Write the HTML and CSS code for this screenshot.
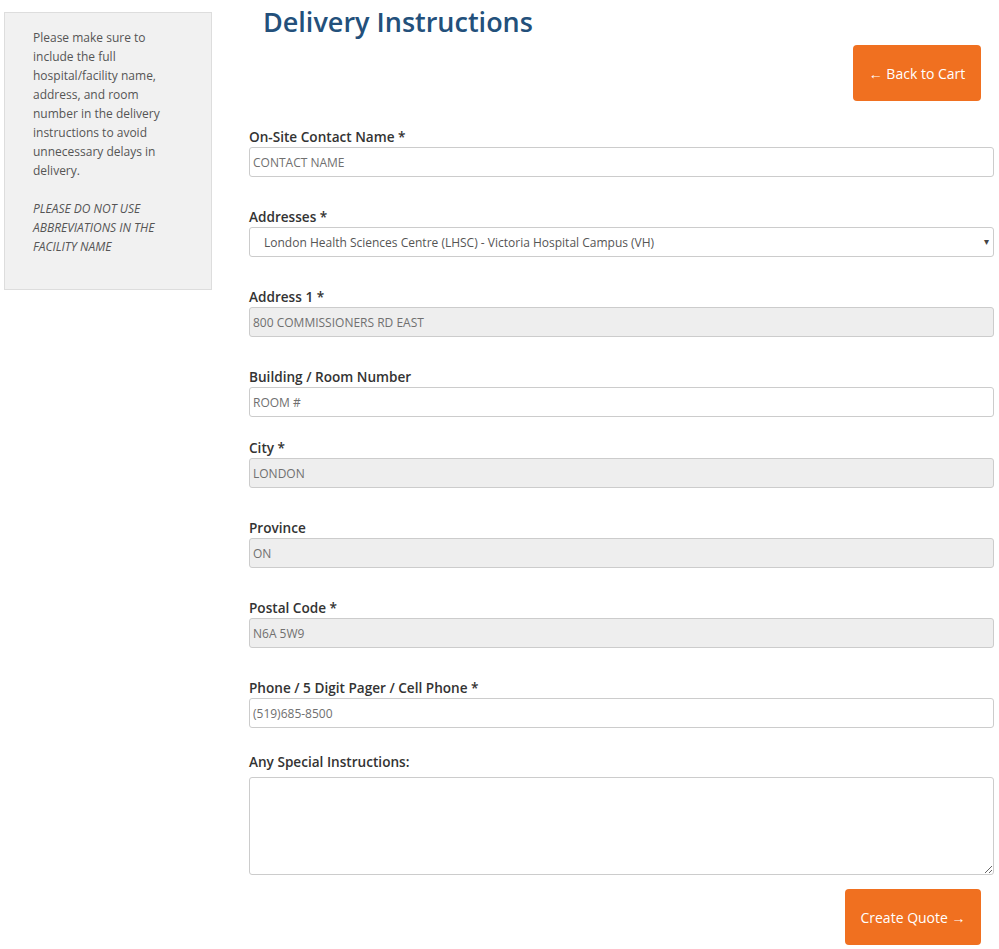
FILE: index.html
```html
<!DOCTYPE html>
<html lang="en">
<head>
<meta charset="utf-8">
<title>Delivery Instructions</title>
<link rel="stylesheet" href="styles.css">
</head>
<body>
<div class="page">
  <aside class="sidebar">
    <p class="note">Please make sure to include the full hospital/facility name, address, and room number in the delivery instructions to avoid unnecessary delays in delivery.</p>
    <p class="note note-em">PLEASE DO NOT USE ABBREVIATIONS IN THE FACILITY NAME</p>
  </aside>
  <main class="main">
    <h1 class="title">Delivery Instructions</h1>
    <div class="toolbar">
      <a class="btn btn-back" href="#">&larr; Back to Cart</a>
    </div>
    <form class="form">
      <div class="field gap-30">
        <label class="label">On-Site Contact Name *</label>
        <input class="input" type="text" value="CONTACT NAME">
      </div>
      <div class="field gap-30">
        <label class="label">Addresses *</label>
        <div class="select-wrap">
          <select class="input select">
            <option>London Health Sciences Centre (LHSC) - Victoria Hospital Campus (VH)</option>
          </select>
          <span class="select-arrow">&#9662;</span>
        </div>
      </div>
      <div class="field gap-30">
        <label class="label">Address 1 *</label>
        <input class="input input-ro" type="text" value="800 COMMISSIONERS RD EAST" readonly>
      </div>
      <div class="field gap-21">
        <label class="label">Building / Room Number</label>
        <input class="input" type="text" value="ROOM #">
      </div>
      <div class="field gap-30">
        <label class="label">City *</label>
        <input class="input input-ro" type="text" value="LONDON" readonly>
      </div>
      <div class="field gap-30">
        <label class="label">Province</label>
        <input class="input input-ro" type="text" value="ON" readonly>
      </div>
      <div class="field gap-30">
        <label class="label">Postal Code *</label>
        <input class="input input-ro" type="text" value="N6A 5W9" readonly>
      </div>
      <div class="field gap-24">
        <label class="label">Phone / 5 Digit Pager / Cell Phone *</label>
        <input class="input" type="text" value="(519)685-8500">
      </div>
      <div class="field gap-14">
        <label class="label">Any Special Instructions:</label>
        <textarea class="input textarea"></textarea>
      </div>
      <div class="actions">
        <a class="btn btn-quote" href="#">Create Quote &rarr;</a>
      </div>
    </form>
  </main>
</div>
</body>
</html>
```
FILE: styles.css
```css
html, body {
  margin: 0;
  padding: 0;
  background: #ffffff;
}

body {
  font-family: "Open Sans", "Liberation Sans", sans-serif;
  color: #333333;
}

.page {
  display: flex;
  align-items: flex-start;
  gap: 37px;
  padding: 0 5px 0 4px;
}

.sidebar {
  flex: 0 0 208px;
  box-sizing: border-box;
  height: 278px;
  margin-top: 12px;
  background: #f1f1f1;
  border: 1px solid #dddddd;
  padding: 15px 28px 0 28px;
}

.note {
  width: 140px;
  margin: 0 0 19px 0;
  font-size: 12px;
  line-height: 19px;
  color: #555555;
}

.note-em {
  font-style: italic;
}

.main {
  flex: 1;
  min-width: 0;
}

.title {
  margin: 0 0 0 14px;
  font-size: 27px;
  font-weight: 600;
  line-height: 44px;
  color: #23507b;
}

.toolbar {
  display: flex;
  justify-content: flex-end;
  padding-right: 13px;
  margin-top: 1px;
}

.btn {
  display: inline-flex;
  align-items: center;
  justify-content: center;
  height: 56px;
  box-sizing: border-box;
  background: #f07020;
  color: #ffffff;
  font-size: 14px;
  text-decoration: none;
  border-radius: 4px;
}

.btn-back {
  width: 128px;
}

.btn-quote {
  width: 136px;
}

.form {
  margin-top: 26px;
}

.field {
  display: flex;
  flex-direction: column;
}

.gap-30 { margin-bottom: 30px; }
.gap-24 { margin-bottom: 24px; }
.gap-21 { margin-bottom: 21px; }
.gap-14 { margin-bottom: 14px; }

.label {
  font-size: 13.6px;
  font-weight: 600;
  line-height: 20px;
  color: #333333;
}

.input {
  box-sizing: border-box;
  width: 100%;
  height: 30px;
  margin: 0;
  padding: 0 3px;
  border: 1px solid #cccccc;
  border-radius: 3px;
  background: #ffffff;
  font-family: "Open Sans", "Liberation Sans", sans-serif;
  font-size: 12px;
  color: #707070;
  outline: none;
}

.input-ro {
  background: #eeeeee;
}

.select-wrap {
  position: relative;
}

.select {
  appearance: none;
  -webkit-appearance: none;
  padding-left: 14px;
  color: #555555;
}

.select-arrow {
  position: absolute;
  right: 5px;
  top: 7px;
  font-size: 10px;
  color: #444444;
  pointer-events: none;
}

.textarea {
  height: 98px;
  margin-top: 5px;
  padding: 4px;
  resize: vertical;
}

.actions {
  display: flex;
  justify-content: flex-end;
  padding-right: 13px;
}
```
